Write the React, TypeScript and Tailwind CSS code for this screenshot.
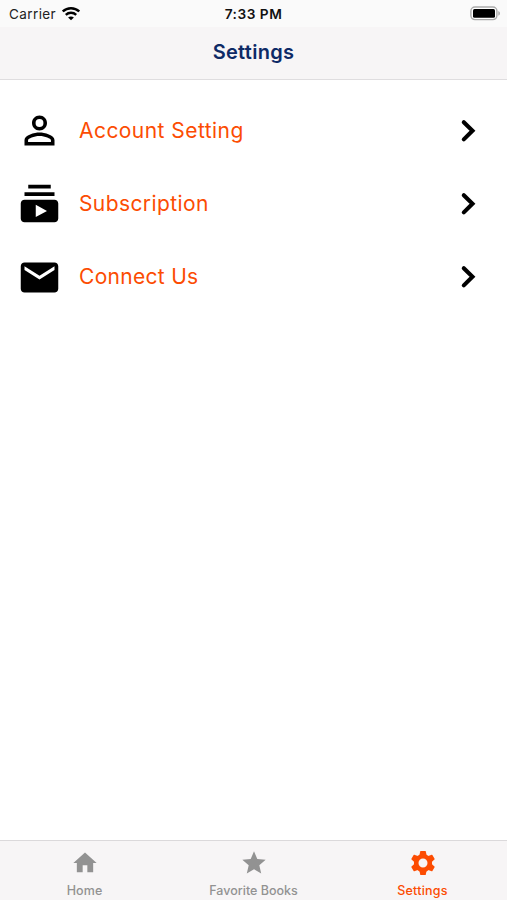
import { MdEmail, MdHome, MdPermIdentity, MdStar, MdSubscriptions } from 'react-icons/md'

const rows = [
  { label: 'Account Setting', icon: MdPermIdentity, tracking: 'tracking-[0.45px]' },
  { label: 'Subscription', icon: MdSubscriptions, tracking: 'tracking-[0.4px]' },
  { label: 'Connect Us', icon: MdEmail, tracking: 'tracking-[0.3px]' },
]

const toothAngles = [0, 60, 120, 180, 240, 300]

function GearIcon({ className }: { className?: string }) {
  return (
    <svg className={className} viewBox="0 0 28 28" fill="currentColor">
      <circle cx="14" cy="14" r="6.8" fill="none" stroke="currentColor" strokeWidth="4.6" />
      {toothAngles.map((angle) => (
        <path
          key={angle}
          d="M10.4 6.6l.8-4.2q.1-.5.6-.5h4.4q.5 0 .6.5l.8 4.2z"
          transform={`rotate(${angle} 14 14)`}
        />
      ))}
    </svg>
  )
}

const tabs = [
  { label: 'Home', icon: MdHome, color: 'text-[#929292]', tracking: 'tracking-[0.1px]' },
  { label: 'Favorite Books', icon: MdStar, color: 'text-[#929292]', tracking: 'tracking-[0px]' },
  { label: 'Settings', icon: GearIcon, color: 'text-[#fc4c02]', tracking: 'tracking-[0.25px]' },
]

function StatusBar() {
  return (
    <div className="grid h-[27px] grid-cols-3 items-center bg-[#fafafa] text-[#111]">
      <div className="flex items-center gap-[6px] pl-[9px]">
        <span className="pt-[2px] text-[13.5px] tracking-[0.4px] text-[#222]">Carrier</span>
        <svg width="18" height="14" viewBox="0 0 18 14" fill="none" stroke="black" strokeWidth="2.4">
          <path d="M.8 4.5C5.3.2 12.7.2 17.2 4.5M3.8 7.8c2.9-2.7 7.5-2.7 10.4 0" />
          <path d="M6.1 10.5c1.7-1.5 4.1-1.5 5.8 0L9 13.3z" fill="black" stroke="none" />
        </svg>
      </div>
      <span className="pt-[2px] text-center text-[13.7px] font-semibold tracking-[0.5px]">7:33 PM</span>
      <div className="flex justify-end pr-[6px]">
        <svg width="31" height="15" viewBox="0 0 31 15">
          <rect x=".9" y="1" width="26" height="12.6" rx="4" fill="white" stroke="#aaa" strokeWidth="1.4" />
          <rect x="3" y="3" width="22" height="8.8" rx="1.5" />
          <path d="M28.3 5c2.2 1 2.2 3.8 0 4.8z" fill="#aaa" />
        </svg>
      </div>
    </div>
  )
}

export default function App() {
  return (
    <div className="flex h-[900px] w-[507px] flex-col bg-white font-['Inter',sans-serif]">
      <header className="h-[80px] border-b border-[#dfdddf] bg-[#f7f5f6]">
        <StatusBar />
        <h1 className="text-center text-[20px] leading-[51px] font-semibold tracking-[0.3px] text-[#0e2a66]">
          Settings
        </h1>
      </header>
      <main className="flex-1 pt-[14px]">
        {rows.map((row) => (
          <div key={row.label} className="flex h-[73.3px] items-center pr-[19px] pl-[17px]">
            <row.icon className="size-[45px] text-black" />
            <span className={`ml-[17px] flex-1 text-[21px] text-[#fc4c02] ${row.tracking}`}>{row.label}</span>
            <svg width="40" height="40" viewBox="0 0 40 40">
              <path
                d="M15.8 11.2l8.7 8.6-8.7 8.6"
                fill="none"
                stroke="black"
                strokeWidth="4.1"
                strokeLinecap="round"
              />
            </svg>
          </div>
        ))}
      </main>
      <nav className="grid h-[60px] grid-cols-3 border-t border-[#dbd9db] bg-[#f7f5f6]">
        {tabs.map((tab) => (
          <div key={tab.label} className={`flex flex-col items-center pt-[8px] ${tab.color}`}>
            <tab.icon className="size-[28px]" />
            <span className={`mt-[5px] text-[12.5px] leading-[18px] font-medium ${tab.tracking}`}>{tab.label}</span>
          </div>
        ))}
      </nav>
    </div>
  )
}
